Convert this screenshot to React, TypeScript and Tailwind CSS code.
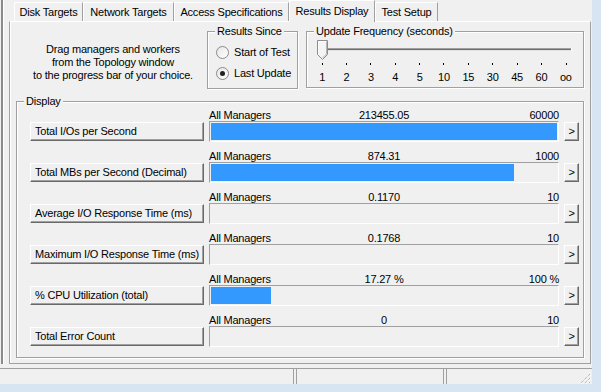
import React from "react";

const tabs = [
  { name: "Disk Targets", w: "w-[69px]" },
  { name: "Network Targets", w: "w-[91px]" },
  { name: "Access Specifications", w: "w-[115px]" },
  { name: "Results Display", w: "w-[86px]", active: true },
  { name: "Test Setup", w: "w-[63px]" },
];

const ticks = ["1", "2", "3", "4", "5", "10", "15", "30", "45", "60", "oo"];
const tickX = [15, 39, 63, 88, 112, 136, 161, 185, 210, 234, 259];

const rows = [
  { label: "Total I/Os per Second", value: "213455.05", max: "60000", pct: 100 },
  { label: "Total MBs per Second (Decimal)", value: "874.31", max: "1000", pct: 87.431 },
  { label: "Average I/O Response Time (ms)", value: "0.1170", max: "10", pct: 0 },
  { label: "Maximum I/O Response Time (ms)", value: "0.1768", max: "10", pct: 0 },
  { label: "% CPU Utilization (total)", value: "17.27 %", max: "100 %", pct: 17.27 },
  { label: "Total Error Count", value: "0", max: "10", pct: 0 },
];

const raised =
  "border border-t-white border-l-white border-r-[#696969] border-b-[#696969] shadow-[inset_-1px_-1px_0_#a0a0a0] bg-[#f0f0f0]";
const group =
  "relative border border-[#a0a0a0] shadow-[inset_1px_1px_0_#fff,1px_1px_0_#fff]";

const Radio = ({ checked, label }: { checked?: boolean; label: string }) => (
  <div className="h-[21px] flex items-center">
    <div className="w-[13px] h-[13px] rounded-full border border-[#8a8a8a] bg-gradient-to-br from-[#e6e6e6] to-white flex items-center justify-center">
      {checked && <div className="w-[5px] h-[5px] rounded-full bg-[#222]" />}
    </div>
    <span className="ml-[5px] whitespace-nowrap">{label}</span>
  </div>
);

export default function App() {
  return (
    <div className="w-[601px] h-[392px] bg-[#d7e4f2] pr-[9px] pb-[8px] font-['Liberation_Sans',Arial,sans-serif] text-[11px] leading-[13px] tracking-[-0.2px] text-black">
      <div className="w-[592px] h-[384px] bg-[#f0f0f0] flex flex-col">
        <div className="h-[368px] flex">
          {/* left splitter edge */}
          <div className="w-[9px] flex">
            <div className="ml-[1px] w-[2px] h-[364px] bg-[#8a8a8a]" />
            <div className="w-[1px] h-[364px] bg-white" />
          </div>

          <div className="w-[582px] flex flex-col">
            {/* tabs */}
            <div className="h-[21px] flex items-end pl-[5px]">
              {tabs.map((t) =>
                t.active ? (
                  <div
                    key={t.name}
                    className={`${t.w} relative z-10 h-[22px] -mb-[1px] bg-[#f0f0f0] border-t border-l border-r border-t-white border-l-white border-r-[#a0a0a0] flex items-center justify-center whitespace-nowrap`}
                  >
                    {t.name}
                  </div>
                ) : (
                  <div
                    key={t.name}
                    className={`${t.w} h-[19px] border-t border-l border-r border-t-white border-l-white border-r-[#a0a0a0] flex items-center justify-center whitespace-nowrap`}
                  >
                    {t.name}
                  </div>
                )
              )}
            </div>

            {/* tab page */}
            <div className="h-[343px] border border-[#a0a0a0] border-t-white shadow-[inset_1px_0_0_#fff] flex flex-col">
              <div className="flex items-start">
                <div className="ml-[12px] mt-[21px] w-[182px] text-center whitespace-nowrap">
                  Drag managers and workers
                  <br />
                  from the Topology window
                  <br />
                  to the progress bar of your choice.
                </div>

                {/* Results Since */}
                <div className={`${group} ml-[3px] mt-[9px] w-[91px] h-[58px] pt-[10px] pl-[8px]`}>
                  <span className="absolute -top-[7px] left-[7px] px-[2px] bg-[#f0f0f0] whitespace-nowrap">
                    Results Since
                  </span>
                  <Radio label="Start of Test" />
                  <Radio label="Last Update" checked />
                </div>

                {/* Update Frequency */}
                <div className={`${group} ml-[8px] mt-[9px] w-[278px] h-[57px]`}>
                  <span className="absolute -top-[7px] left-[7px] px-[2px] bg-[#f0f0f0] whitespace-nowrap">
                    Update Frequency (seconds)
                  </span>
                  <svg width="276" height="38" className="block">
                    <rect x="15" y="16" width="250" height="1" fill="#a0a0a0" />
                    <rect x="15" y="17" width="250" height="1" fill="#6d6d6d" />
                    <rect x="15" y="18" width="250" height="1" fill="#e3e3e3" />
                    <rect x="264" y="16" width="1" height="3" fill="#ffffff" />
                    {tickX.map((x) => (
                      <rect key={x} x={x} y="31" width="1" height="2" fill="#000" />
                    ))}
                    <path
                      d="M10.5 8.5 H20.5 V22.5 L15.5 27.5 L10.5 22.5 Z"
                      fill="#f4f4f4"
                      stroke="#8c8c8c"
                    />
                    <path d="M11.5 22.5 V9.5 H19.5" fill="none" stroke="#ffffff" />
                    <path d="M19.5 9.5 V22 L15.5 26" fill="none" stroke="#b4b4b4" />
                  </svg>
                  <div className="ml-[3px] mt-[1px] w-[268px] grid grid-cols-11 h-[13px]">
                    {ticks.map((t) => (
                      <span key={t} className="text-center">
                        {t}
                      </span>
                    ))}
                  </div>
                </div>
              </div>

              {/* Display */}
              <div className={`${group} ml-[6px] mt-[12px] w-[568px] h-[257px] pt-[7px] pl-[13px] flex flex-col gap-[8px]`}>
                <span className="absolute -top-[7px] left-[7px] px-[2px] bg-[#f0f0f0]">Display</span>
                {rows.map((r) => (
                  <div key={r.label} className="flex items-end">
                    <div className={`${raised} w-[174px] h-[19px] mb-[1px] pl-[4px] flex items-center whitespace-nowrap`}>
                      {r.label}
                    </div>
                    <div className="ml-[5px] w-[350px]">
                      <div className="h-[12px] leading-[12px] grid grid-cols-[1fr_auto_1fr] whitespace-nowrap">
                        <span>All Managers</span>
                        <span>{r.value}</span>
                        <span className="text-right">{r.max}</span>
                      </div>
                      <div className="h-[21px] border border-t-[#a0a0a0] border-l-[#a0a0a0] border-r-white border-b-white p-[1px]">
                        <div className="h-full bg-[#3399ff]" style={{ width: `${r.pct}%` }} />
                      </div>
                    </div>
                    <div className={`${raised} ml-[5px] w-[15px] h-[19px] mb-[1px] flex items-center justify-center`}>
                      &gt;
                    </div>
                  </div>
                ))}
              </div>
            </div>
          </div>
        </div>

        {/* status bar */}
        <div className="h-[16px] flex gap-[2px] border-t border-[#a0a0a0]">
          <div className="w-[294px] border-r border-[#a0a0a0]" />
          <div className="w-[148px] border-x border-[#a0a0a0]" />
          <div className="flex-1 border-l border-[#a0a0a0] flex justify-end items-end pr-[1px]">
            <svg width="11" height="11" className="block">
              <path d="M10 1 L1 10 M10 5 L5 10 M10 9 L9 10" stroke="#a0a0a0" strokeDasharray="1 1" />
              <path d="M11 2 L2 11 M11 6 L6 11" stroke="#ffffff" strokeDasharray="1 1" />
            </svg>
          </div>
        </div>
      </div>
    </div>
  );
}
